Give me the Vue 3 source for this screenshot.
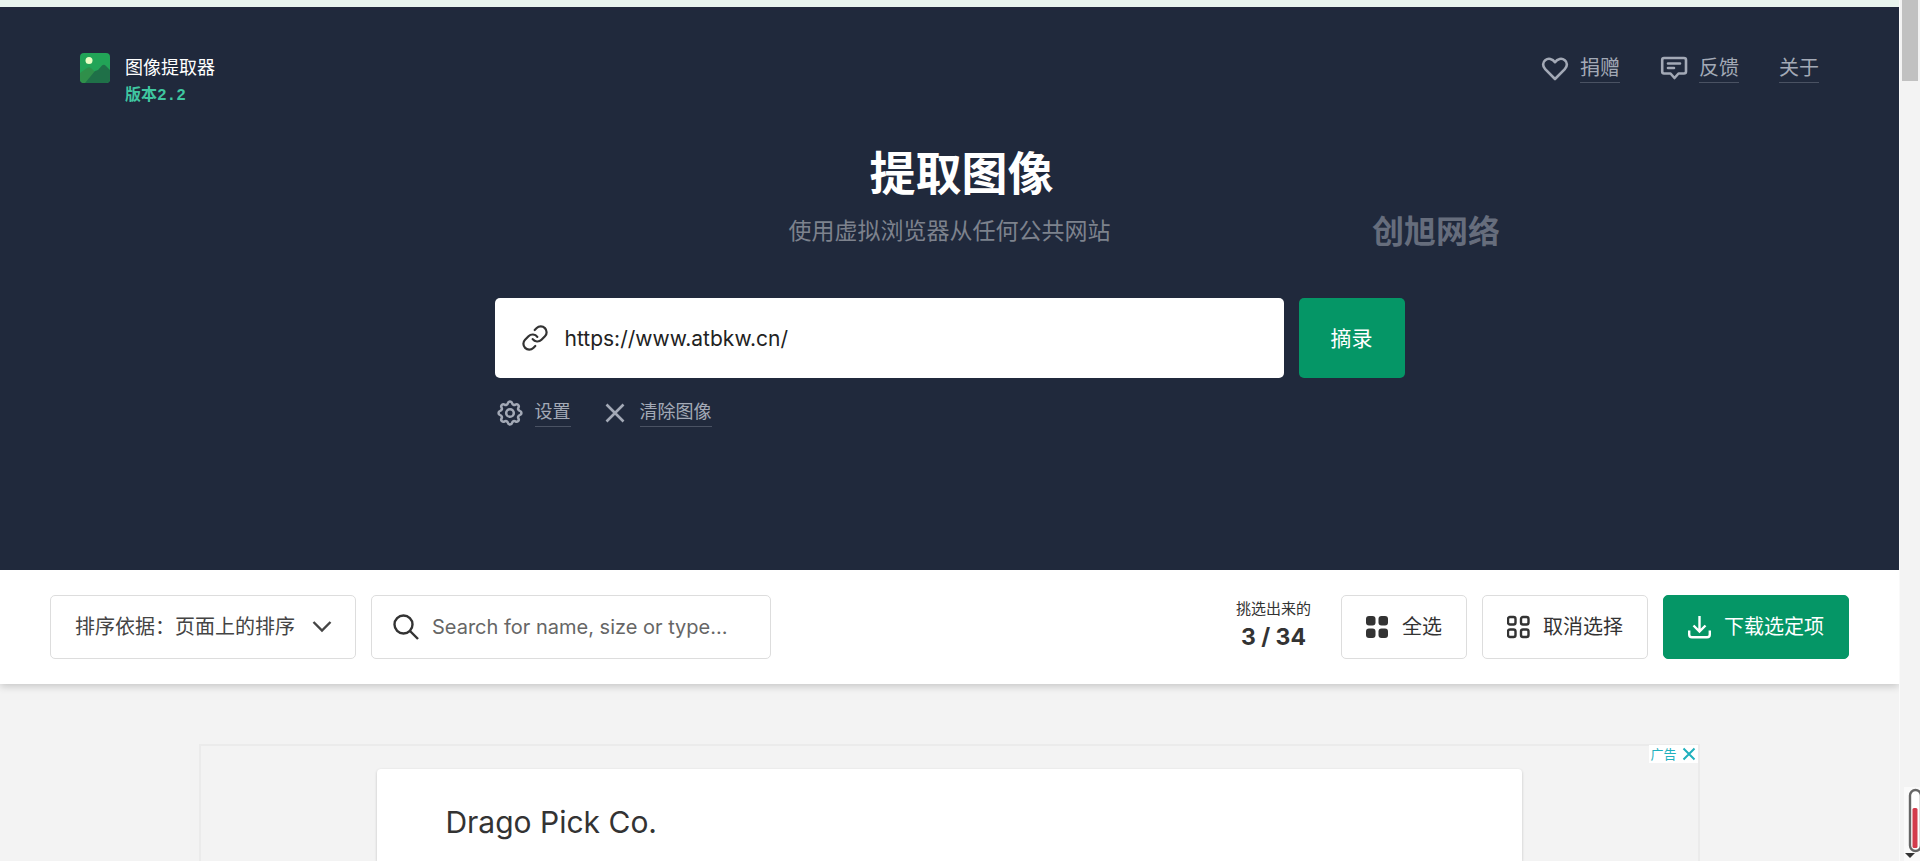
<script setup>
  import { ref, computed } from 'vue';

  const url = ref('https://www.atbkw.cn/')
  const search = ref('')
  const sortBy = ref('page')

  const total = 34
  const selected = ref(3)
  const counter = computed(() => selected.value + ' / ' + total)

  const sortOptions = [
    { value: 'page', title: '排序依据：页面上的排序' },
    { value: 'name', title: '排序依据：名称' },
    { value: 'size', title: '排序依据：大小' },
  ]

  const selectAll = () => { selected.value = total }
  const deselectAll = () => { selected.value = 0 }
</script>

<template>
  <div class="page">
    <main class="content">
      <div class="strip"></div>

      <header class="hero">
        <div class="topbar">
          <div class="brand">
            <svg class="logo" viewBox="0 0 30 30">
              <defs>
                <clipPath id="logo-clip"><rect width="30" height="30" rx="4" /></clipPath>
              </defs>
              <g clip-path="url(#logo-clip)">
                <rect width="30" height="30" fill="#22a457" />
                <path d="M0 20 L7 15 Q9 13.5 11 15 L27 30 H0 Z" fill="#2f8f4a" />
                <path d="M5 30 L15 18 L18 17 L22 12.500 Q24 11 26 13 L30 17 V30 Z" fill="#1f7048" />
                <circle cx="9" cy="7.5" r="3.5" fill="#e9ffc4" />
              </g>
            </svg>
            <div>
              <div class="brand-name">图像提取器</div>
              <div class="brand-version">版本2.2</div>
            </div>
          </div>

          <nav class="nav">
            <a href="#donate" class="nav-link">
              <svg class="icon28" viewBox="0 0 28 28" fill="none" stroke="currentColor" stroke-width="2.6" stroke-linejoin="round">
                <path d="M14 25 L4.2 15.200 C1.3 12.2 1.6 8.2 4.2 6.2 C7.2 3.8 11.5 4.6 14 8.2 C16.5 4.6 20.8 3.8 23.8 6.2 C26.4 8.2 26.7 12.2 23.8 15.2 Z" />
              </svg>
              <span>捐赠</span>
            </a>
            <a href="#feedback" class="nav-link">
              <svg class="icon28" viewBox="0 0 28 28" fill="none" stroke="currentColor" stroke-width="2.6" stroke-linejoin="round" stroke-linecap="round">
                <path d="M4 4 H24 Q26 4 26 6 V17.5 Q26 19.5 24 19.5 H18.5 L14.5 24 L10.5 19.5 H4 Q2.2 19.5 2.2 17.5 V6 Q2.2 4 4 4 Z" />
                <path d="M8 9.5 H20 M8 14 H14" />
              </svg>
              <span>反馈</span>
            </a>
            <a href="#about" class="nav-link"><span>关于</span></a>
          </nav>
        </div>

        <h1 class="title">提取图像</h1>
        <p class="subtitle">使用虚拟浏览器从任何公共网站</p>

        <div class="extract">
          <form class="extract-form" @submit.prevent>
            <label class="url-box" for="url">
              <svg class="icon28" viewBox="0 0 24 24" fill="none" stroke="currentColor" stroke-width="1.9" stroke-linecap="round">
                <path d="M10 13a5 5 0 0 0 7.54.54l3-3a5 5 0 0 0-7.07-7.07l-1.72 1.71" />
                <path d="M14 11a5 5 0 0 0-7.54-.54l-3 3a5 5 0 0 0 7.07 7.07l1.710-1.710" />
              </svg>
              <input id="url" v-model="url" type="text" aria-label="网址" />
            </label>
            <button class="btn-extract" type="submit"><span>摘录</span></button>
          </form>

          <div class="options">
            <a href="#settings" class="option">
              <svg class="icon28" viewBox="1 1 22 22" fill="none" stroke="currentColor" stroke-width="2">
                <path d="M10.325 4.317c.426-1.756 2.924-1.756 3.35 0a1.724 1.724 0 0 0 2.573 1.066c1.543-.94 3.310.826 2.370 2.370a1.724 1.724 0 0 0 1.065 2.572c1.756.426 1.756 2.924 0 3.350a1.724 1.724 0 0 0-1.066 2.573c.940 1.543-.826 3.310-2.370 2.370a1.724 1.724 0 0 0-2.572 1.065c-.426 1.756-2.924 1.756-3.350 0a1.724 1.724 0 0 0-2.573-1.066c-1.543.940-3.310-.826-2.370-2.370a1.724 1.724 0 0 0-1.065-2.572c-1.756-.426-1.756-2.924 0-3.350a1.724 1.724 0 0 0 1.066-2.573c-.940-1.543.826-3.310 2.370-2.370.996.608 2.296.070 2.572-1.065z" />
                <circle cx="12" cy="12" r="3" />
              </svg>
              <span>设置</span>
            </a>
            <a href="#clear" class="option">
              <svg class="icon28" viewBox="0 0 28 28" fill="none" stroke="currentColor" stroke-width="2.6">
                <path d="M5.5 5.5 L22.5 22.5 M22.5 5.5 L5.5 22.5" />
              </svg>
              <span>清除图像</span>
            </a>
          </div>
        </div>

        <div class="watermark">创旭网络</div>
      </header>

      <section class="toolbar">
        <div class="sort">
          <select v-model="sortBy" aria-label="排序依据">
            <option v-for="opt in sortOptions" :key="opt.value" :value="opt.value">{{ opt.title }}</option>
          </select>
          <svg class="chevron" viewBox="0 0 20 20" fill="none" stroke="currentColor" stroke-width="2.4">
            <path d="M1.5 5 L10 13.5 L18.5 5" />
          </svg>
        </div>

        <label class="search" for="search">
          <svg class="icon28" viewBox="0 0 28 28" fill="none" stroke="currentColor" stroke-width="2.4">
            <circle cx="11.5" cy="11.5" r="9" />
            <path d="M18 18 L26 26" />
          </svg>
          <input id="search" v-model="search" type="text" placeholder="Search for name, size or type…" autocomplete="off" />
        </label>

        <div class="counter">
          <div class="counter-label">挑选出来的</div>
          <div class="counter-value">{{ counter }}</div>
        </div>

        <div class="actions">
          <button class="btn" type="button" @click="selectAll">
            <svg class="icon24" viewBox="0 0 24 24" fill="currentColor">
              <rect x="0" y="1" width="9.5" height="9.5" rx="3" />
              <rect x="12.5" y="1" width="9.5" height="9.5" rx="3" />
              <rect x="0" y="13.5" width="9.5" height="9.5" rx="3" />
              <rect x="12.5" y="13.5" width="9.5" height="9.5" rx="3" />
            </svg>
            <span>全选</span>
          </button>
          <button class="btn" type="button" @click="deselectAll">
            <svg class="icon24" viewBox="0 0 24 24" fill="none" stroke="currentColor" stroke-width="2.4">
              <rect x="1" y="2" width="7.5" height="7.5" rx="2" />
              <rect x="14" y="2" width="7.5" height="7.5" rx="2" />
              <rect x="1" y="14.5" width="7.5" height="7.5" rx="2" />
              <rect x="14" y="14.5" width="7.5" height="7.5" rx="2" />
            </svg>
            <span>取消选择</span>
          </button>
          <button class="btn btn-download" type="button">
            <svg class="icon24" viewBox="0 0 24 24" fill="none" stroke="currentColor" stroke-width="2.4">
              <path d="M11.500 1 V16 M5.5 10.5 L11.5 16.5 L17.5 10.5" />
              <path d="M1.2 15.5 V19.5 Q1.2 22.3 4 22.3 H19 Q21.8 22.3 21.8 19.5 V15.5" />
            </svg>
            <span>下载选定项</span>
          </button>
        </div>
      </section>

      <section class="ad">
        <div class="ad-mark">
          <span>广告</span>
          <button type="button" aria-label="关闭广告">
            <svg viewBox="0 0 14 14" fill="none" stroke="currentColor" stroke-width="2">
              <path d="M1.5 1.5 L12.5 12.5 M12.5 1.5 L1.5 12.5" />
            </svg>
          </button>
        </div>
        <div class="ad-card">Drago Pick Co.</div>
      </section>
    </main>

    <div class="scrollbar">
      <div class="thumb"></div>
    </div>

    <!-- meter widget, part of it hangs off the window edge -->
    <svg class="meter" viewBox="0 0 16 74">
      <rect width="16" height="74" fill="#fafafa" />
      <rect x="6" y="3" width="11" height="61" rx="5.5" fill="#fff" stroke="#666" stroke-width="2.4" />
      <rect x="8.5" y="21" width="5" height="40" rx="1.5" fill="#d33c4d" />
      <path d="M1 66 H11 L6 71 Z" fill="#333" />
    </svg>
  </div>
</template>

<style>
body {
  margin: 0;
  background: #f3f3f3;
}
</style>

<style scoped>
.page {
  position: relative;
  display: flex;
  min-height: 100vh;
  overflow: hidden;
  background: #f3f3f3;
  color: #333;
  font-family: Inter, "Noto Sans CJK SC", sans-serif;
  font-size: 20px;
}

.content {
  flex: 1;
  display: flex;
  flex-direction: column;
  min-width: 0;
}

input, select, button {
  font-family: inherit;
  font-size: 20px;
  color: inherit;
}

.strip {
  height: 7px;
  background: #e8f4ee;
}

/* hero */
.hero {
  position: relative;
  padding: 40px 80px 143px;
  background: #20293c;
}

.topbar {
  display: flex;
  justify-content: space-between;
  align-items: flex-start;
}

.brand {
  display: flex;
  gap: 15px;
}

.logo {
  width: 30px;
  height: 30px;
  margin-top: 6px;
}

.brand-name {
  color: #fff;
  font-size: 18px;
  line-height: 42px;
}

.brand-version {
  color: #3fc6a0;
  font-family: "Liberation Mono", "Noto Sans CJK SC", monospace;
  font-size: 16px;
  font-weight: 700;
  line-height: 14px;
}

.nav {
  display: flex;
  gap: 40px;
  height: 42px;
  align-items: center;
}

.nav-link, .option {
  display: flex;
  align-items: center;
  gap: 11px;
  color: #a3a9b6;
  text-decoration: none;
}

.nav-link span, .option span {
  line-height: 28px;
  border-bottom: 1px solid #4a5263;
}

.icon28 {
  width: 28px;
  height: 28px;
  flex: none;
}

.icon24 {
  width: 24px;
  height: 24px;
  flex: none;
}

.title {
  margin: 40px 0 12px;
  padding-left: 24px;
  color: #fff;
  font-size: 46px;
  font-weight: 700;
  line-height: 60px;
  text-align: center;
}

.subtitle {
  margin: 0 0 51px;
  color: #7d828d;
  font-size: 23px;
  line-height: 32px;
  text-align: center;
}

.extract {
  max-width: 910px;
  margin: 0 auto;
}

.extract-form {
  display: flex;
  gap: 15px;
}

.url-box {
  flex: 1;
  display: flex;
  align-items: center;
  gap: 16px;
  height: 80px;
  padding: 0 26px;
  box-sizing: border-box;
  border-radius: 5px;
  background: #fff;
}

.url-box input, .search input {
  flex: 1;
  min-width: 0;
  padding: 0;
  border: 0;
  outline: 0;
  background: transparent;
}

.url-box input {
  color: #222;
  font-size: 21px;
}

.btn-extract {
  padding: 0 32px;
  border: 0;
  border-radius: 5px;
  background: #059666;
  color: #fff;
  font-size: 21px;
  cursor: pointer;
}

.btn-extract span, .btn span {
  display: block;
  padding-bottom: 3px;
}

.options {
  display: flex;
  gap: 30px;
  margin-top: 20px;
  padding-left: 1px;
}

.option {
  font-size: 18px;
}

.watermark {
  position: absolute;
  top: 205px;
  left: 1372px;
  color: #666d7c;
  font-size: 32px;
  font-weight: 700;
  line-height: 40px;
}

/* toolbar */
.toolbar {
  display: flex;
  align-items: center;
  gap: 15px;
  padding: 25px 50px;
  background: #fff;
  box-shadow: 0 2px 8px rgba(0, 0, 0, 0.2);
}

.sort {
  position: relative;
  color: #444;
}

.sort select {
  display: block;
  width: 306px;
  height: 64px;
  padding: 0 50px 0 24px;
  border: 1px solid #ddd;
  border-radius: 5px;
  background: #fff;
  appearance: none;
}

.chevron {
  position: absolute;
  top: 22px;
  right: 24px;
  width: 20px;
  height: 20px;
  pointer-events: none;
}

.search {
  display: flex;
  align-items: center;
  gap: 12px;
  width: 400px;
  height: 64px;
  padding: 0 20px;
  box-sizing: border-box;
  border: 1px solid #ddd;
  border-radius: 5px;
}

.search input::placeholder {
  color: #666;
  opacity: 1;
}

.counter {
  margin-left: auto;
  padding-bottom: 4px;
  text-align: center;
}

.counter-label {
  font-size: 15px;
  line-height: 24px;
}

.counter-value {
  font-size: 23px;
  font-weight: 700;
  line-height: 32px;
}

.actions {
  display: flex;
  gap: 15px;
  margin-left: 15px;
}

.btn {
  display: flex;
  align-items: center;
  gap: 12px;
  height: 64px;
  padding: 0 24px;
  border: 1px solid #ddd;
  border-radius: 5px;
  background: #fff;
  cursor: pointer;
}

.btn-download {
  border-color: #059666;
  background: #059666;
  color: #fff;
}

/* ad */
.ad {
  position: relative;
  flex: 1;
  width: 79%;
  margin: 60px auto 0;
  box-sizing: border-box;
  padding: 23px 176px 0;
  border: 2px solid #ebebeb;
  border-bottom: 0;
  display: flex;
}

.ad-mark {
  position: absolute;
  top: -1px;
  right: 0;
  display: flex;
  align-items: center;
  gap: 5px;
  padding: 0 2px;
  background: #fff;
  color: #1fb0bd;
  font-size: 13px;
  line-height: 18px;
}

.ad-mark button {
  display: flex;
  padding: 0;
  border: 0;
  background: none;
}

.ad-mark svg {
  width: 14px;
  height: 14px;
}

.ad-card {
  flex: 1;
  padding: 31px 68px 0;
  border-radius: 4px 4px 0 0;
  background: #fff;
  box-shadow: 0 1px 3px rgba(0, 0, 0, 0.2);
  font-size: 30px;
  line-height: 44px;
}

/* window scrollbar */
.scrollbar {
  width: 16px;
  padding: 0 2px;
  border-left: 1px solid #fafafa;
  background: #f3f3f3;
}

.thumb {
  height: 81px;
  background: #c1c1c1;
}

.meter {
  position: absolute;
  right: 0;
  bottom: 0;
  width: 16px;
  height: 74px;
}
</style>
